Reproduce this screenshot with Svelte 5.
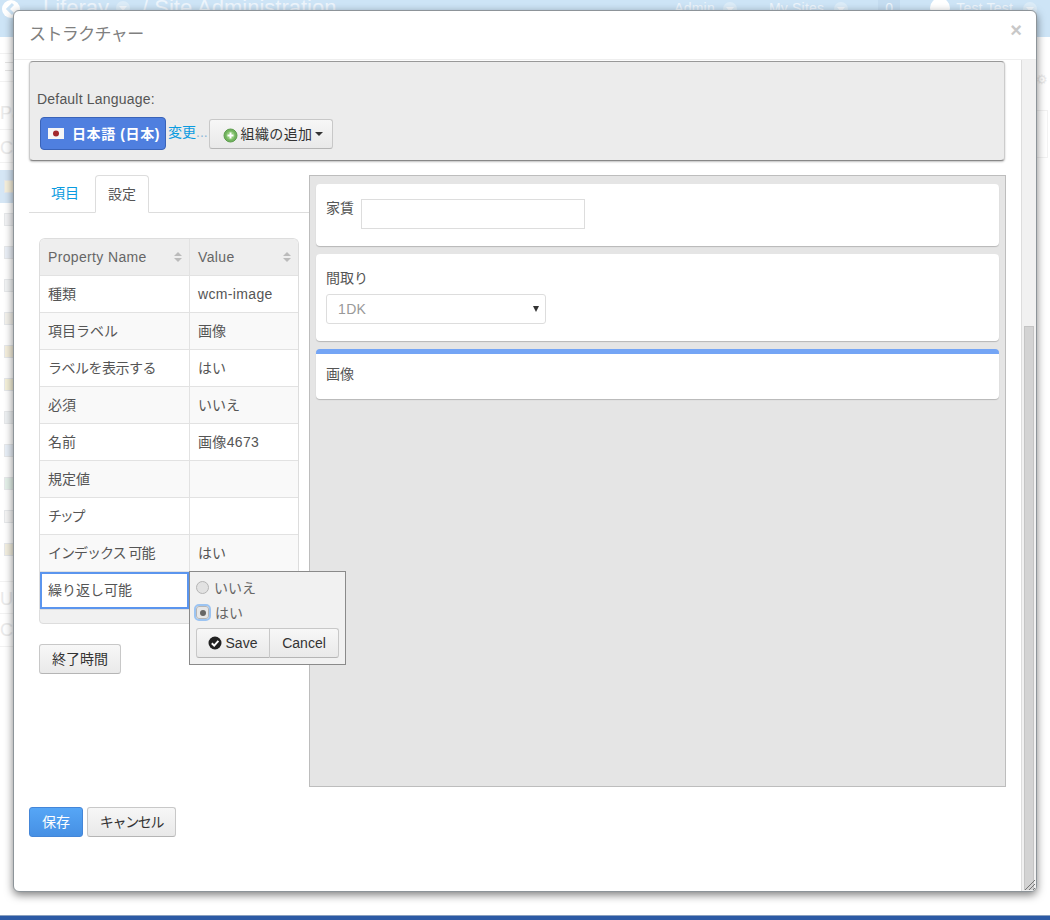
<script>
  const rows = [
    { k: '種類', v: 'wcm-image', vc: 'lat' },
    { k: '項目ラベル', v: '画像' },
    { k: 'ラベルを表示する', v: 'はい', kc: 't1' },
    { k: '必須', v: 'いいえ' },
    { k: '名前', v: '画像4673', vc: 'lat' },
    { k: '規定値', v: '' },
    { k: 'チップ', v: '', kc: 't3' },
    { k: 'インデックス 可能', v: 'はい', kc: 't2' }
  ];
  const icons = [
    '#f6f0dc', '#f2f3f5', '#ebf0f7', '#f2f4f5', '#f4f2ec', '#f5efdd',
    '#f5f1da', '#eef1f3', '#e9f0f8', '#e5f1ea', '#f5f5f5', '#f3efe0'
  ];
</script>

<div class="page">
  <header class="topbar">
    <div class="back"><svg width="16" height="16" viewBox="0 0 16 16"><path d="M10 3 5 8l5 5" fill="none" stroke="#cde4f6" stroke-width="3"/></svg></div>
    <span class="brand">Liferay</span><i class="dot big"></i><span class="brand">/ Site Administration</span>
    <span class="spacer"></span>
    <span class="nav">Admin</span><i class="dot"></i>
    <span class="nav sites">My Sites</span><i class="dot wide"></i>
    <span class="nav badge">0</span>
    <i class="avatar"></i><span class="nav">Test Test</span><i class="dot wide"></i>
  </header>

  <div class="under">
    <aside class="side">
      <div class="srow menu"><i></i></div>
      <div class="srow text">Pa</div>
      <div class="srow text last">Co</div>
      {#each icons as c, i}
        <div class="srow irow" class:sel={i === 0}><i class="sicon" style="background:{c}"></i></div>
      {/each}
      <div class="srow text user">Us</div>
      <div class="srow text">Co</div>
    </aside>
    <div class="rside"><span class="gear">⚙</span><div class="rbox"></div></div>
  </div>
  <div class="bottombar"></div>

  <section class="modal">
    <div class="mhead">
      <h3>ストラクチャー</h3>
      <span class="close">×</span>
    </div>
    <div class="mbody">
      <div class="content">
        <div class="panel">
          <div class="lang-label">Default Language:</div>
          <div class="lang-row">
            <span class="lang">
              <svg class="flag" width="16" height="11" viewBox="0 0 16 11"><rect width="16" height="11" fill="#f6f6f6"/><circle cx="8" cy="5.5" r="3" fill="#a3282c"/></svg>
              <span>日本語 (日本)</span>
            </span>
            <a class="change" href="#x">変更</a><span class="dots">...</span>
            <button class="btn add">
              <svg width="15" height="15" viewBox="0 0 15 15"><circle cx="7.5" cy="7.5" r="6.5" fill="#71b35e" stroke="#5d9c4d"/><circle cx="7.5" cy="7.5" r="4.2" fill="#8fca78"/><path d="M7.5 4.5v6M4.5 7.5h6" stroke="#fff" stroke-width="2"/></svg>
              <span class="addtext">組織の追加</span><i class="caret"></i>
            </button>
          </div>
        </div>

        <div class="columns">
          <div class="left">
            <div class="tabs">
              <a class="tab link" href="#x">項目</a>
              <span class="tab active">設定</span>
            </div>
            <div class="tablewrap">
              <table>
                <thead>
                  <tr>
                    <th><div class="th"><span class="lat">Property Name</span><span class="sort"><i class="up"></i><i class="down"></i></span></div></th>
                    <th><div class="th"><span class="lat">Value</span><span class="sort"><i class="up"></i><i class="down"></i></span></div></th>
                  </tr>
                </thead>
                <tbody>
                  {#each rows as r}
                    <tr><td class={r.kc}>{r.k}</td><td class={r.vc}>{r.v}</td></tr>
                  {/each}
                  <tr class="editing"><td class="focus">繰り返し可能</td><td></td></tr>
                </tbody>
              </table>
              <div class="tfoot"></div>
              <div class="popup">
                <label class="radio"><span class="rb"></span>いいえ</label>
                <label class="radio on"><span class="rb"><b></b></span>はい</label>
                <div class="btngroup">
                  <button class="btn seg save">
                    <svg width="16" height="16" viewBox="0 0 16 16"><circle cx="8" cy="8" r="6.5" fill="#222"/><path d="M4.8 8.2 7.2 10.6 11.4 5.9" fill="none" stroke="#fff" stroke-width="2"/></svg>
                    Save
                  </button>
                  <button class="btn seg">Cancel</button>
                </div>
              </div>
            </div>
            <button class="btn endtime">終了時間</button>
          </div>

          <div class="preview">
            <div class="field rent">
              <label for="rent">家賃</label>
              <input id="rent" type="text" />
            </div>
            <div class="field plan">
              <div class="flabel">間取り</div>
              <div class="select"><span class="lat">1DK</span><i class="sel-caret"></i></div>
            </div>
            <div class="field image"><div class="flabel">画像</div></div>
          </div>
        </div>

        <div class="actions">
          <button class="btn primary">保存</button>
          <button class="btn cancel">キャンセル</button>
        </div>
      </div>
      <div class="scrollbar">
        <div class="thumb"></div>
      </div>
    </div>
    <svg class="grip" width="14" height="14" viewBox="0 0 14 14"><path d="M13 3 3 13M13 7 7 13M13 11 11 13" stroke="#777" fill="none"/></svg>
  </section>
</div>

<style>
  :global(body) { margin: 0; background: #fff; }
  .page {
    position: relative; width: 1050px; height: 920px; overflow: hidden; display: flex; flex-direction: column;
    font: 14px/20px "Liberation Sans", "Noto Sans CJK JP", sans-serif; color: #555;
  }
  .topbar {
    height: 37px; flex: none; background: #cde4f6; display: flex; align-items: flex-start;
    padding: 0 13px 0 2px; box-sizing: border-box; color: #edf5fc; overflow: hidden;
  }
  .back { width: 18px; height: 18px; margin: 0 23px 0 0; background: #fff; border-radius: 50%; display: flex; align-items: center; justify-content: center; }
  .brand { font-size: 22px; line-height: 16px; }
  .dot { position: relative; width: 14px; height: 14px; border-radius: 50%; background: #dcecf8; margin: 2px 0 0 8px; flex: none; }
  .dot::after { content: ""; position: absolute; left: 3px; top: 5px; border: 4px solid transparent; border-top: 5px solid #f2f8fd; border-bottom: 0; }
  .dot.big { margin: 1px 12px 0 7px; }
  .dot.wide { margin-left: 10px; }
  .spacer { flex: 1; }
  .nav { font-size: 14px; line-height: 16px; letter-spacing: .2px; }
  .nav.sites { margin-left: 32px; }
  .nav.badge { margin-left: 30px; margin-right: 30px; width: 22px; text-align: center; background: #c4dcf0; height: 16px; }
  .avatar { width: 20px; height: 20px; background: #fff; border-radius: 50%; margin: -2px 6px 0 0; flex: none; }

  .under { flex: 1; display: flex; justify-content: space-between; min-height: 0; }
  .side { width: 14px; padding-top: 16px; color: #e9e9e9; font-size: 18px; overflow: hidden; }
  .srow { box-sizing: border-box; white-space: nowrap; }
  .menu { height: 29px; border-top: 1px solid #f2f2f2; border-bottom: 1px solid #f2f2f2; margin-bottom: 15px; padding: 8px 0 0 5px; }
  .menu i { display: block; width: 9px; height: 9px; border-top: 1px solid #e4e4e4; border-bottom: 1px solid #e4e4e4; box-sizing: border-box; }
  .text { height: 33px; line-height: 32px; border-bottom: 1px solid #f2f2f2; }
  .text.last { margin-bottom: 7px; height: 33px; line-height: 36px; }
  .text.user { border-top: 1px solid #f2f2f2; margin-top: 15px; line-height: 34px; }
  .irow { height: 33px; padding: 10px 0 0 4px; }
  .irow.sel { background: #d5e6f5; }
  .sicon { display: block; width: 12px; height: 13px; border: 1px solid #e6e8ea; box-sizing: border-box; }

  .rside { width: 14px; padding-top: 34px; }
  .gear { display: block; color: #eaeaea; font-size: 13px; line-height: 18px; }
  .rbox { margin-top: 21px; width: 12px; height: 48px; border: 1px solid #f2f2f2; border-left: 0; box-sizing: border-box; }
  .bottombar { flex: none; height: 5px; background: #2c5aa5; border-top: 1px solid #8aa0bf; box-sizing: border-box; }

  .modal {
    position: absolute; left: 13px; top: 10px; width: 1024px; height: 882px; box-sizing: border-box;
    background: #fff; border: 1px solid #8d9499; border-radius: 6px;
    box-shadow: 0 3px 9px rgba(0,0,0,.5); display: flex; flex-direction: column; overflow: hidden;
  }
  .mhead { height: 49px; flex: none; border-bottom: 1px solid #eee; position: relative; box-sizing: border-box; }
  h3 { margin: 0; padding: 11px 15px; font-size: 17px; line-height: 26px; font-weight: 400; color: #808080; letter-spacing: -.6px; }
  .close { position: absolute; right: 14px; top: 9px; font: bold 20px/20px "Liberation Sans", sans-serif; color: #c8c8c8; }
  .mbody { flex: 1; display: flex; min-height: 0; }
  .content { flex: 1; padding: 1px 15px 0 15px; min-width: 0; }
  .scrollbar { width: 15px; flex: none; background: #f1f1f1; border-left: 1px solid #ddd; box-sizing: border-box; padding-top: 266px; }
  .thumb { height: 564px; margin: 0 2px; background: #d3d3d3; border: 1px solid #c4c4c4; border-bottom: 0; box-sizing: border-box; }
  .grip { position: absolute; right: 0; bottom: 0; }

  .lat { letter-spacing: .35px; }
  .t1 { letter-spacing: -.5px; }
  .t2 { letter-spacing: -1px; }
  .t3 { letter-spacing: -2.2px; }

  .panel {
    height: 100px; width: 976px; box-sizing: border-box; background: #ececec; border: 1px solid #ccc;
    border-color: #999 #ccc #888 #ccc; border-radius: 4px; box-shadow: 0 1px 2px rgba(0,0,0,.25); padding: 27px 0 0 7px;
  }
  .lang-label { line-height: 20px; letter-spacing: .2px; }
  .lang-row { display: flex; align-items: flex-start; margin-top: 8px; margin-left: 3px; }
  .lang {
    width: 126px; height: 33px; box-sizing: border-box; background: #4f7fdf; border: 1px solid #3a63b8; border-radius: 4px;
    color: #fff; font-weight: 700; display: flex; align-items: center; gap: 8px; padding-left: 7px; white-space: nowrap; letter-spacing: .6px;
  }
  .change { color: #0a9be0; text-decoration: none; margin: 5px 0 0 2px; line-height: 20px; }
  .dots { color: #8fb9d8; margin-top: 5px; width: 13px; line-height: 20px; }
  .btn {
    font: 14px/20px "Liberation Sans", "Noto Sans CJK JP", sans-serif; color: #333; box-sizing: border-box;
    background: linear-gradient(#f7f7f7, #e9e9e9); border: 1px solid #c8c8c8; border-bottom-color: #b5b5b5; border-radius: 3px; padding: 0; cursor: pointer;
  }
  .add { width: 124px; height: 30px; display: flex; align-items: center; justify-content: center; gap: 3px; margin-top: 2px; padding-left: 3px; }
  .add svg { margin-top: 2px; }
  .addtext { letter-spacing: .4px; }
  .caret { border: 4px solid transparent; border-top-color: #333; border-bottom: 0; margin-left: -1px; }

  .columns { display: flex; margin-top: 14px; }
  .left { width: 280px; flex: none; }
  .tabs { height: 38px; box-sizing: border-box; border-bottom: 1px solid #ddd; display: flex; padding-left: 10px; }
  .tab { height: 38px; box-sizing: border-box; line-height: 36px; padding: 0 12px; }
  .tab.link { color: #0a9be0; text-decoration: none; width: 56px; }
  .tab.active { width: 54px; color: #555; background: #fff; border: 1px solid #ddd; border-bottom-color: #fff; border-radius: 4px 4px 0 0; }

  .tablewrap { position: relative; margin: 25px 0 0 10px; width: 260px; }
  table {
    width: 260px; border-spacing: 0; border-radius: 6px 6px 0 0;
    overflow: hidden; display: block; border: 1px solid #ddd; border-bottom: 0; box-sizing: border-box;
  }
  thead, tbody { display: block; }
  tr { display: grid; grid-template-columns: 149px 109px; }
  th, td { box-sizing: border-box; height: 37px; padding: 8px; border-bottom: 1px solid #e2e2e2; font-weight: 400; text-align: left; line-height: 20px; white-space: nowrap; color: #555; }
  th + th, td + td { border-left: 1px solid #e2e2e2; }
  th { background: #eee; color: #666; }
  .th { display: flex; justify-content: space-between; align-items: center; }
  .sort { display: flex; flex-direction: column; gap: 2px; margin-right: -1px; }
  .sort i { border: 4px solid transparent; }
  .sort .up { border-top: 0; border-bottom: 4px solid #bbb; }
  .sort .down { border-bottom: 0; border-top: 4px solid #bbb; }
  tbody tr:nth-child(even) td { background: #f9f9f9; }
  tbody tr:last-child td { background: #fff; }
  td.focus { outline: 2px solid #5b95ee; outline-offset: -2px; border-bottom: 0; }
  .tfoot { height: 15px; background: #f1f1f1; border: 1px solid #ddd; box-sizing: border-box; border-radius: 0 0 4px 4px; }

  .popup {
    position: absolute; left: 150px; top: 333px; width: 157px; height: 94px; box-sizing: border-box; background: #f1f1f1;
    border: 1px solid #8a8a8a; padding: 3px 6px 0 6px;
  }
  .radio { display: flex; align-items: center; height: 25px; gap: 5px; color: #666; }
  .rb { width: 13px; height: 13px; border-radius: 50%; background: #e2e2e2; border: 1px solid #b5b5b5; box-sizing: border-box; display: flex; align-items: center; justify-content: center; }
  .radio.on .rb { outline: 2px solid #9cc4f2; border-radius: 3px; background: #e7e7e7; }
  .radio.on { gap: 6px; }
  .rb b { width: 6px; height: 6px; border-radius: 50%; background: #666; }
  .btngroup { display: flex; margin-top: 3px; }
  .seg { width: 70px; height: 30px; border-radius: 3px 0 0 3px; display: flex; align-items: center; justify-content: center; gap: 3px; }
  .seg + .seg { border-left: 0; border-radius: 0 3px 3px 0; }
  .save { width: 74px; flex: none; padding-right: 2px; }

  .endtime { display: block; width: 82px; height: 30px; margin: 20px 0 0 10px; }

  .preview { width: 697px; height: 612px; box-sizing: border-box; background: #e5e5e5; border: 1px solid #bdbdbd; padding: 8px 6px 0 6px; display: flex; flex-direction: column; gap: 8px; }
  .field { background: #fff; border-radius: 4px; box-shadow: 0 1px 1px rgba(0,0,0,.2); padding: 0 10px; box-sizing: border-box; }
  .rent { height: 62px; display: flex; align-items: flex-start; gap: 7px; padding-top: 14px; }
  .rent label { line-height: 20px; }
  .rent input { width: 224px; height: 30px; margin: 1px 0 0 0; box-sizing: border-box; border: 1px solid #ddd; padding: 0; background: #fff; }
  .plan { height: 87px; padding-top: 14px; }
  .flabel { line-height: 20px; }
  .select { width: 220px; height: 30px; margin-top: 6px; box-sizing: border-box; border: 1px solid #ddd; border-radius: 3px; display: flex; justify-content: space-between; align-items: center; padding: 0 6px 0 11px; color: #999; }
  .sel-caret { border: 3px solid transparent; border-top: 6px solid #333; border-bottom: 0; }
  .image { height: 50px; border-top: 5px solid #74a5f5; padding-top: 10px; }

  .actions { display: flex; gap: 4px; margin-top: 20px; }
  .primary { width: 54px; height: 30px; background: linear-gradient(#56a6f6, #4690e4); border-color: #4486d8; color: #fff; }
  .cancel { width: 89px; height: 30px; letter-spacing: -1.3px; }
</style>
